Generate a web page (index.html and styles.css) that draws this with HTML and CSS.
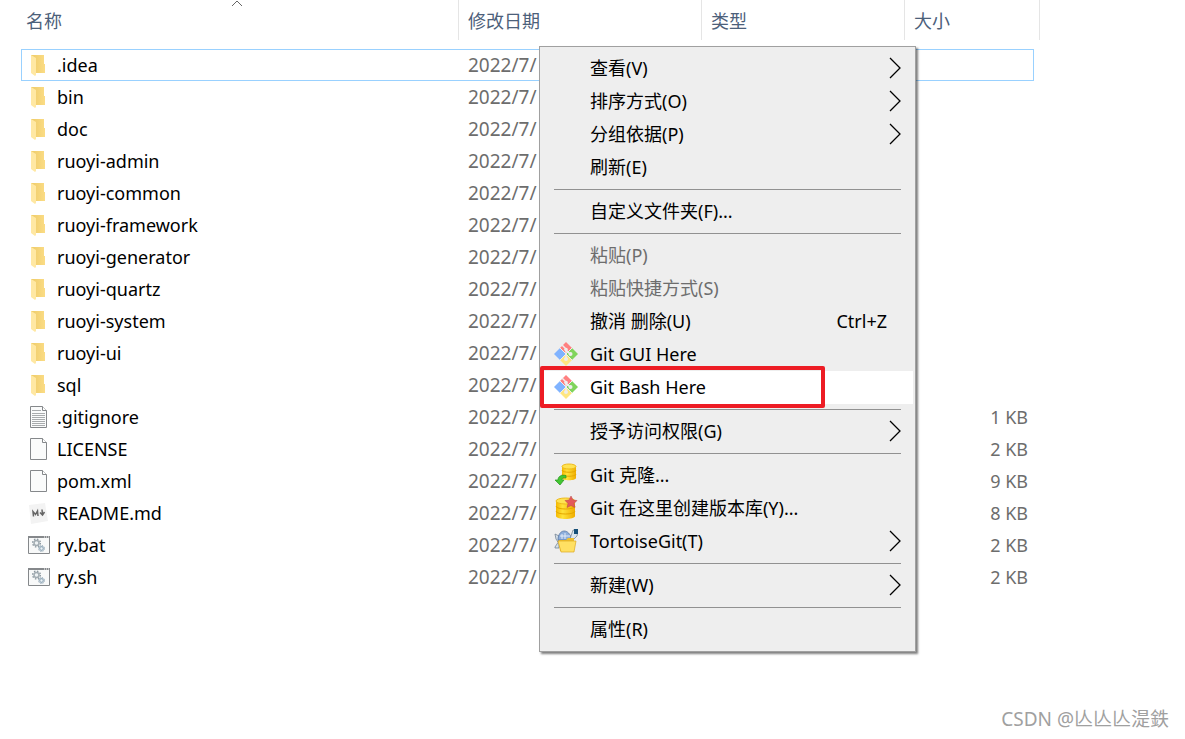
FILE: index.html
```
<!DOCTYPE html>
<html lang="zh-CN">
<head>
  <meta charset="UTF-8" />
  <meta name="viewport" content="width=device-width, initial-scale=1.0"/>
  <title>ruoyi</title>
  <link rel="stylesheet" href="styles.css">
</head>
<body>
  <!-- icons -->
  <svg class="sprite" aria-hidden="true">
    <defs>
      <linearGradient id="folderBack" x1="0" x2="1">
        <stop offset="0" stop-color="#eecb68"/>
        <stop offset="1" stop-color="#fbdc85"/>
      </linearGradient>
      <linearGradient id="gold" x1="0" x2="1">
        <stop offset="0" stop-color="#f5b800"/>
        <stop offset="0.35" stop-color="#ffe23a"/>
        <stop offset="1" stop-color="#f0ad00"/>
      </linearGradient>
    </defs>
    <symbol id="folder" viewBox="0 0 24 24">
      <path d="M4 2h13v9h1v9H4z" fill="url(#folderBack)"/>
      <path d="M4 2l5 3v17l-1 1-4-3z" fill="#ffe8a3"/>
    </symbol>
    <symbol id="page" viewBox="0 0 24 24">
      <path d="M3.500 1.500h12l4 4v17h-16z" fill="#fafbfb" stroke="#85888b"/>
      <path d="M15.500 1.500v4h4" fill="#fff" stroke="#85888b"/>
    </symbol>
    <symbol id="text" viewBox="0 0 24 24">
      <path d="M3.500 1.500h12l4 4v17h-16z" fill="#fafbfb" stroke="#85888b"/>
      <path d="M15.500 1.500v4h4" fill="#fff" stroke="#85888b"/>
      <path d="M5 5.500h9M5 8.500h13M5 10.500h13M5 12.500h13M5 14.500h13M5 16.500h13M5 18.500h13M5 20.500h13" stroke="#a8abad"/>
    </symbol>
    <symbol id="markdown" viewBox="0 0 24 24">
      <path d="M2 4l16-2 3 18-17 3z" fill="#f3f3f3"/>
      <path d="M6.500 15.500L6 10.500l2.500 3 2-3.500.5 5M15 8.500l.5 5.500M13 11.500l2.500 2.500 2-3" fill="none" stroke="#666" stroke-width="1.500"/>
    </symbol>
    <symbol id="script" viewBox="0 0 24 24">
      <path d="M1.500 3.500h21v17h-21z" fill="#f8f9f9" stroke="#85888b"/>
      <path d="M1 4h22" stroke="#85888b" stroke-width="2"/>
      <path d="M17 4h1M19 4h1M21 4h1" stroke="#fff"/>
      <circle cx="9.500" cy="10" r="2.500" fill="#eef2f4" stroke="#a3adb3" stroke-width="1.500"/>
      <circle cx="9.500" cy="10" r="3.900" fill="none" stroke="#8b979f" stroke-width="1.300" stroke-dasharray="1.500 1.560"/>
      <circle cx="14.500" cy="15.500" r="1.800" fill="#eef4f8" stroke="#93a9b9" stroke-width="1.200"/>
      <circle cx="14.500" cy="15.500" r="3" fill="none" stroke="#7f97a8" stroke-dasharray="1.100 1.250"/>
    </symbol>
    <symbol id="git" viewBox="0 0 24 24">
      <path d="M12 0l6 6-6 6-6-6z" fill="#ff8080"/>
      <path d="M18 6l6 6-6 6-6-6z" fill="#80d45c"/>
      <path d="M12 12l6 6-6 6-6-6z" fill="#ffe680"/>
      <path d="M6 6l6 6-6 6-6-6z" fill="#80b3ff"/>
      <path d="M6 6l6 6-6 6M18 6l-6 6 6 6" fill="none" stroke="#eee"/>
      <path d="M8 3l4 4v10M12 8l4 4" fill="none" stroke="#eee" stroke-width="1.500"/>
      <circle cx="12" cy="7.500" r="1.800" fill="#eee"/>
      <circle cx="12" cy="17" r="2" fill="#eee"/>
      <circle cx="16.500" cy="12" r="2" fill="#eee"/>
    </symbol>
    <symbol id="clone" viewBox="0 0 24 24">
      <path d="M8 3v12c0 3 14 3 14 0V3z" fill="url(#gold)"/>
      <path d="M8 7c0 3 14 3 14 0M8 11c0 3 14 3 14 0" fill="none" stroke="#e5a800"/>
      <ellipse cx="15" cy="3.500" rx="7" ry="2.500" fill="#ffe352" stroke="#eebb1c"/>
      <path d="M12 12.500c-5-1-8 1-8 4.500H1l5 5 4-5H8c0-2 1-2.500 4-2z" fill="#43c732" stroke="#27951d" stroke-width="0.700"/>
    </symbol>
    <symbol id="create" viewBox="0 0 24 24">
      <path d="M2 5v15c0 4 19 4 19 0V5z" fill="url(#gold)"/>
      <path d="M2 10c0 4 19 4 19 0M2 15c0 4 19 4 19 0" fill="none" stroke="#e5a800"/>
      <ellipse cx="11.500" cy="5" rx="9.500" ry="3" fill="#ffe352" stroke="#eebb1c"/>
      <path d="M17 0l2 4 4 .5-3 3 1 4-4-2-4 2 1-4-3-3 4-.5z" fill="#e35a5a" stroke="#b94646" stroke-width="0.500"/>
    </symbol>
    <symbol id="tortoise" viewBox="0 0 24 24">
      <path d="M1 5l4 2-1 6-2-3zM1 18l4-6v7H1z" fill="#d5e0e8" stroke="#68798a" stroke-width="0.700"/>
      <path d="M4 11c0-11 11-13 14 0z" fill="#8daedc" stroke="#506f9d" stroke-width="0.700"/>
      <path d="M8 5v5M11 4v6M6 7h10" stroke="#e3ebf8"/>
      <path d="M16 10l3-9 5 1-1 5-4 4z" fill="#dbe6ed" stroke="#6b7f8d" stroke-width="0.700"/>
      <path d="M20 0l4 0v5h-4z" fill="#155078"/>
      <path d="M5 11h7l2-2h6v13H6z" fill="#eebf2d"/>
      <path d="M4 12h18l-2 11H7z" fill="#ffe063" stroke="#dca91f" stroke-width="0.700"/>
    </symbol>
    <symbol id="arrow" viewBox="0 0 12 22">
      <path d="M1 1l10 10L1 21" fill="none" stroke="#000" stroke-width="1.300"/>
    </symbol>
  </svg>

  <main class="explorer">
    <table class="files">
      <colgroup>
        <col class="col-name"><col class="col-date"><col class="col-type"><col class="col-size"><col class="col-end">
      </colgroup>
      <thead>
        <tr>
          <th>名称
            <svg class="sort" viewBox="0 0 12 7" aria-hidden="true"><path d="M1 6l5-5 5 5" fill="none" stroke="#666"/></svg>
          </th>
          <th>修改日期</th>
          <th>类型</th>
          <th colspan="2">大小</th>
        </tr>
      </thead>
      <tbody>
        <tr class="focused"><td><svg class="icon"><use href="#folder"/></svg>.idea</td><td>2022/7/</td><td></td><td></td></tr>
        <tr><td><svg class="icon"><use href="#folder"/></svg>bin</td><td>2022/7/</td><td></td><td></td></tr>
        <tr><td><svg class="icon"><use href="#folder"/></svg>doc</td><td>2022/7/</td><td></td><td></td></tr>
        <tr><td><svg class="icon"><use href="#folder"/></svg>ruoyi-admin</td><td>2022/7/</td><td></td><td></td></tr>
        <tr><td><svg class="icon"><use href="#folder"/></svg>ruoyi-common</td><td>2022/7/</td><td></td><td></td></tr>
        <tr><td><svg class="icon"><use href="#folder"/></svg>ruoyi-framework</td><td>2022/7/</td><td></td><td></td></tr>
        <tr><td><svg class="icon"><use href="#folder"/></svg>ruoyi-generator</td><td>2022/7/</td><td></td><td></td></tr>
        <tr><td><svg class="icon"><use href="#folder"/></svg>ruoyi-quartz</td><td>2022/7/</td><td></td><td></td></tr>
        <tr><td><svg class="icon"><use href="#folder"/></svg>ruoyi-system</td><td>2022/7/</td><td></td><td></td></tr>
        <tr><td><svg class="icon"><use href="#folder"/></svg>ruoyi-ui</td><td>2022/7/</td><td></td><td></td></tr>
        <tr><td><svg class="icon"><use href="#folder"/></svg>sql</td><td>2022/7/</td><td></td><td></td></tr>
        <tr><td><svg class="icon"><use href="#text"/></svg>.gitignore</td><td>2022/7/</td><td></td><td>1 KB</td></tr>
        <tr><td><svg class="icon"><use href="#page"/></svg>LICENSE</td><td>2022/7/</td><td></td><td>2 KB</td></tr>
        <tr><td><svg class="icon"><use href="#page"/></svg>pom.xml</td><td>2022/7/</td><td></td><td>9 KB</td></tr>
        <tr><td><svg class="icon"><use href="#markdown"/></svg>README.md</td><td>2022/7/</td><td></td><td>8 KB</td></tr>
        <tr><td><svg class="icon"><use href="#script"/></svg>ry.bat</td><td>2022/7/</td><td></td><td>2 KB</td></tr>
        <tr><td><svg class="icon"><use href="#script"/></svg>ry.sh</td><td>2022/7/</td><td></td><td>2 KB</td></tr>
      </tbody>
    </table>

    <!-- right-click menu -->
    <div class="menu">
      <button type="button">查看(V)<svg class="arrow"><use href="#arrow"/></svg></button>
      <button type="button">排序方式(O)<svg class="arrow"><use href="#arrow"/></svg></button>
      <button type="button">分组依据(P)<svg class="arrow"><use href="#arrow"/></svg></button>
      <button type="button">刷新(E)</button>
      <hr>
      <button type="button">自定义文件夹(F)...</button>
      <hr>
      <button type="button" disabled>粘贴(P)</button>
      <button type="button" disabled>粘贴快捷方式(S)</button>
      <button type="button">撤消 删除(U)<span class="shortcut">Ctrl+Z</span></button>
      <button type="button"><svg class="menu-icon"><use href="#git"/></svg>Git GUI Here</button>
      <button type="button" class="active"><svg class="menu-icon"><use href="#git"/></svg>Git Bash Here<span class="marker"></span></button>
      <hr>
      <button type="button">授予访问权限(G)<svg class="arrow"><use href="#arrow"/></svg></button>
      <hr>
      <button type="button"><svg class="menu-icon"><use href="#clone"/></svg>Git 克隆...</button>
      <button type="button"><svg class="menu-icon"><use href="#create"/></svg>Git 在这里创建版本库(Y)...</button>
      <button type="button"><svg class="menu-icon"><use href="#tortoise"/></svg>TortoiseGit(T)<svg class="arrow"><use href="#arrow"/></svg></button>
      <hr>
      <button type="button">新建(W)<svg class="arrow"><use href="#arrow"/></svg></button>
      <hr>
      <button type="button">属性(R)</button>
    </div>
  </main>

  <footer class="watermark">CSDN @亾亾亾湜鉄</footer>
</body>
</html>
```
FILE: styles.css
```
* {
  box-sizing: border-box;
}
body {
  font-family: 'Noto Sans', 'Noto Sans CJK SC', sans-serif;
  font-size: 18px;
  margin: 0;
  min-height: 100vh;
  background-color: white;
  color: black;
  display: flex;
  flex-direction: column;
}
.sprite {
  position: absolute;
  width: 0;
  height: 0;
}
.explorer {
  position: relative;
  flex: 1;
  padding-left: 21px;
}

/* file list */
.files {
  table-layout: fixed;
  width: 1019px;
  border-collapse: separate;
  border-spacing: 0;
}
.col-name {
  width: 438px;
}
.col-date {
  width: 243px;
}
.col-type {
  width: 203px;
}
.col-size {
  width: 129px;
}
.col-end {
  width: 6px;
}
.files th {
  position: relative;
  height: 40px;
  padding: 0 0 0 9px;
  border-right: 1px solid #e5e5e5;
  color: #4c607a;
  font-weight: normal;
  text-align: left;
}
.files th:first-child {
  padding-left: 5px;
}
.sort {
  position: absolute;
  top: 0;
  left: 48%;
  width: 12px;
  height: 7px;
}
.files tbody::before {
  content: "";
  display: block;
  height: 9px;
}
.files td {
  height: 32px;
  padding: 0 0 0 9px;
  border: 0 solid #99d1ff;
  line-height: 24px;
  color: #6d6d6d;
  white-space: nowrap;
}
.files td:first-child {
  padding-left: 6px;
  color: black;
}
.files td:nth-child(2) {
  font-size: 19px;
}
.files td:nth-child(4) {
  padding-right: 6px;
  text-align: right;
}
.files .focused td {
  border-width: 1px 0;
}
.files .focused td:first-child {
  border-left-width: 1px;
  padding-left: 5px;
}
.files .focused td:last-child {
  border-right-width: 1px;
}
.icon {
  width: 24px;
  height: 24px;
  margin-right: 6px;
  vertical-align: top;
}

/* context menu */
.menu {
  position: absolute;
  top: 46px;
  left: 539px;
  width: 377px;
  padding: 5px 2px;
  background-color: #eeeeee;
  border: 1px solid #a0a0a0;
  box-shadow: 2px 2px 2px rgba(0,0,0,0.5);
}
.menu button {
  position: relative;
  display: flex;
  align-items: center;
  width: 100%;
  height: 33px;
  padding: 0 12px 2px 48px;
  border: none;
  background: none;
  font: inherit;
  line-height: 24px;
  color: black;
  text-align: left;
}
.menu button:disabled {
  color: #6d6d6d;
}
.menu button:hover,
.menu .active {
  background-color: white;
}
.menu hr {
  height: 1px;
  margin: 5px 12px;
  border: none;
  background-color: #919191;
}
.menu-icon {
  width: 24px;
  height: 24px;
  margin-left: -36px;
  margin-right: 12px;
}
.arrow {
  width: 12px;
  height: 22px;
  margin-left: auto;
}
.shortcut {
  margin-left: auto;
  margin-right: 14px;
}
.marker {
  position: absolute;
  top: -5px;
  left: -2px;
  z-index: 1;
  width: 285px;
  height: 42px;
  border: 4px solid #ed1c24;
  border-radius: 2px;
}

.watermark {
  padding: 0 16px 8px;
  font-size: 19px;
  line-height: 24px;
  color: #a0a0a0;
  text-align: right;
}
```
